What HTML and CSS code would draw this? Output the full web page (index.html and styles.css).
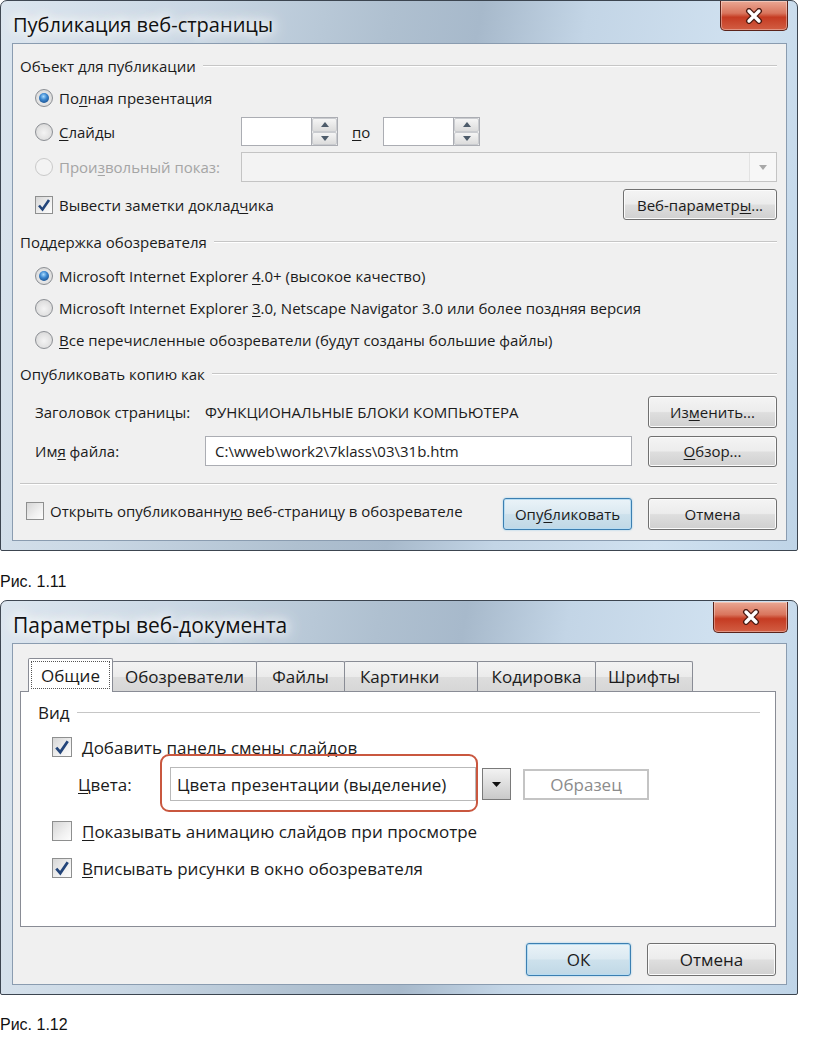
FILE: index.html
```html
<!DOCTYPE html>
<html lang="ru">
<head>
  <meta charset="utf-8">
  <title>Публикация веб-страницы</title>
  <link rel="stylesheet" href="styles.css">
</head>
<body>
  <!-- Рис. 1.11 -->
  <div class="win">
    <div class="titlebar">
      <span class="title">Публикация веб-страницы</span>
      <span class="close">
        <svg width="22" height="16" viewBox="0 0 22 16"><path d="M6 3 L16 13 M16 3 L6 13" stroke="#4a1a12" stroke-width="6" stroke-linecap="round"/><path d="M6 3 L16 13 M16 3 L6 13" stroke="#fff" stroke-width="3.4" stroke-linecap="round"/></svg>
      </span>
    </div>
    <div class="client pub">
      <div class="grp g-object"><span>Объект для публикации</span></div>
      <div class="row r-full"><span class="radio on"></span><span>По<u>л</u>ная презентация</span></div>
      <div class="row r-slides">
        <span class="opt"><span class="radio"></span><span><u>С</u>лайды</span></span>
        <span class="spin">
          <span class="field"></span>
          <span class="spin-btns">
            <span><svg width="8" height="5" viewBox="0 0 8 5"><path d="M0 5 L4 0 L8 5Z" fill="#4d5b6a"/></svg></span>
            <span><svg width="8" height="5" viewBox="0 0 8 5"><path d="M0 0 L4 5 L8 0Z" fill="#4d5b6a"/></svg></span>
          </span>
        </span>
        <span class="po"><u>п</u>о</span>
        <span class="spin">
          <span class="field"></span>
          <span class="spin-btns">
            <span><svg width="8" height="5" viewBox="0 0 8 5"><path d="M0 5 L4 0 L8 5Z" fill="#4d5b6a"/></svg></span>
            <span><svg width="8" height="5" viewBox="0 0 8 5"><path d="M0 0 L4 5 L8 0Z" fill="#4d5b6a"/></svg></span>
          </span>
        </span>
      </div>
      <div class="row r-custom disabled">
        <span class="opt"><span class="radio off"></span><span>Прои<u>з</u>вольный показ:</span></span>
        <span class="combo-off"><span class="combo-arrow"><svg width="8" height="5" viewBox="0 0 8 5"><path d="M0 0 L4 5 L8 0Z" fill="#a8a8a8"/></svg></span></span>
      </div>
      <div class="row r-notes">
        <span class="check"><svg width="14" height="14" viewBox="0 0 14 14"><path d="M2 7.5 L5.5 11.5 L12 2" fill="none" stroke="#23457a" stroke-width="2.6"/></svg></span>
        <span>Вывести заметки доклад<u>ч</u>ика</span>
        <span class="btn btn-web">Веб-параметр<u>ы</u>...</span>
      </div>

      <div class="grp g-browser"><span>Поддержка обозревателя</span></div>
      <div class="row r-ie"><span class="radio on"></span><span>Microsoft Internet Explorer <u>4</u>.0+ (высокое качество)</span></div>
      <div class="row r-ie"><span class="radio"></span><span>Microsoft Internet Explorer <u>3</u>.0, Netscape Navigator 3.0 или более поздняя версия</span></div>
      <div class="row r-ie"><span class="radio"></span><span><u>В</u>се перечисленные обозреватели (будут созданы большие файлы)</span></div>

      <div class="grp g-copy"><span>Опубликовать копию как</span></div>
      <div class="row r-title">
        <span class="lbl">Заголовок страницы:</span>
        <span>ФУНКЦИОНАЛЬНЫЕ БЛОКИ КОМПЬЮТЕРА</span>
        <span class="btn btn-side">Из<u>м</u>енить...</span>
      </div>
      <div class="row r-file">
        <span class="lbl">Им<u>я</u> файла:</span>
        <span class="field file-field">C:\wweb\work2\7klass\03\31b.htm</span>
        <span class="btn btn-side"><u>О</u>бзор...</span>
      </div>
      <div class="sep"></div>
      <div class="row r-bottom">
        <span class="open"><span class="check"></span><span>Открыть опубликованну<u>ю</u> веб-страницу в обозревателе</span></span>
        <span class="btn btn-default btn-publish">Опу<u>б</u>ликовать</span>
        <span class="btn btn-cancel">Отмена</span>
      </div>
    </div>
  </div>
  <p class="caption">Рис. 1.11</p>

  <!-- Рис. 1.12 -->
  <div class="win">
    <div class="titlebar">
      <span class="title title-big">Параметры веб-документа</span>
      <span class="close close-wide">
        <svg width="22" height="16" viewBox="0 0 22 16"><path d="M6 3 L16 13 M16 3 L6 13" stroke="#4a1a12" stroke-width="6" stroke-linecap="round"/><path d="M6 3 L16 13 M16 3 L6 13" stroke="#fff" stroke-width="3.4" stroke-linecap="round"/></svg>
      </span>
    </div>
    <div class="client opts">
      <div class="tabs">
        <span class="tab tab-general active">Общие</span>
        <span class="tab tab-browsers">Обозреватели</span>
        <span class="tab tab-files">Файлы</span>
        <span class="tab tab-pics">Картинки</span>
        <span class="tab tab-enc">Кодировка</span>
        <span class="tab tab-fonts">Шрифты</span>
      </div>
      <div class="panel">
        <div class="grp g-view"><span>Вид</span></div>
        <div class="row c-nav">
          <span class="check big"><svg width="16" height="16" viewBox="0 0 14 14"><path d="M2 7.5 L5.5 11.5 L12 2" fill="none" stroke="#23457a" stroke-width="2.4"/></svg></span>
          <span><u>Д</u>обавить панель смены слайдов</span>
        </div>
        <div class="row c-colors">
          <span class="clr-lbl"><u>Ц</u>вета:</span>
          <span class="combo-wrap"><span class="combo">Цвета презентации (выделение)</span></span>
          <span class="drop"><svg width="9" height="5" viewBox="0 0 9 5"><path d="M0 0 L4.5 5 L9 0Z" fill="#111"/></svg></span>
          <span class="sample">Образец</span>
        </div>
        <div class="row c-anim">
          <span class="check big"></span>
          <span><u>П</u>оказывать анимацию слайдов при просмотре</span>
        </div>
        <div class="row c-fit">
          <span class="check big"><svg width="16" height="16" viewBox="0 0 14 14"><path d="M2 7.5 L5.5 11.5 L12 2" fill="none" stroke="#23457a" stroke-width="2.4"/></svg></span>
          <span><u>В</u>писывать рисунки в окно обозревателя</span>
        </div>
      </div>
      <div class="actions">
        <span class="btn btn-default btn-ok">ОК</span>
        <span class="btn btn-cancel">Отмена</span>
      </div>
    </div>
  </div>
  <p class="caption caption-last">Рис. 1.12</p>
</body>
</html>
```

FILE: styles.css
```css
/* Базовые настройки */
*, *::before, *::after { box-sizing: border-box; }
body {
  margin: 0;
  background: #fff;
  font-family: "Open Sans", "Noto Sans", sans-serif;
  color: #1b1b1b;
}
u { text-decoration-thickness: 1px; text-underline-offset: 2px; }

/* Окно в стиле Windows 7 */
.win {
  width: 798px;
  display: flex; flex-direction: column;
  border: 1px solid #3c4550;
  border-radius: 7px 7px 2px 2px;
  padding: 0 10px 9px 11px;
  background: linear-gradient(100deg, #dce6ef 0%, #c9d7e4 22%, #afc0d0 44%, #a7b9cb 54%, #c3d5e6 66%, #d0e1f0 84%, #bfd4e7 100%);
}
.titlebar { height: 42px; display: flex; justify-content: space-between; align-items: center; }
.title {
  font-size: 20px; margin-top: 5px; margin-left: 1px; color: #111;
  text-shadow: 0 0 8px #fff, 0 0 14px #fff, 0 0 20px #fff, 0 0 26px #fff;
}
.title-big { font-size: 21px; }
.close {
  align-self: flex-start;
  width: 68px; height: 30px; margin-right: -1px;
  display: flex; align-items: center; justify-content: center;
  border: 1px solid #5b231a; border-top: 0;
  border-radius: 0 0 5px 5px;
  background: linear-gradient(#eaa894 0%, #d9755d 42%, #c53b22 56%, #d25e43 100%);
  box-shadow: inset 0 0 0 1px rgba(255, 255, 255, .35);
}
.close-wide { width: 75px; height: 31px; margin-top: 1px; }
.client { background: #f0f0f0; border: 1px solid #8a9cb0; }

/* Общие элементы управления */
.row { display: flex; align-items: center; }
.grp { display: flex; align-items: center; }
.grp::after {
  content: ''; flex: 1; margin-left: 7px;
  border-top: 1px solid #c6c6c6; border-bottom: 1px solid #fff;
}
.radio {
  width: 18px; height: 18px; flex: none; margin-right: 6px;
  border-radius: 50%; border: 1px solid #8c8f94;
  background: radial-gradient(circle at 50% 55%, #f4f4f4 0, #e2e2e2 55%, #cfcfcf 100%);
  display: flex; align-items: center; justify-content: center;
}
.radio.on::after {
  content: ''; width: 10px; height: 10px; border-radius: 50%;
  background: radial-gradient(circle at 45% 35%, #a9dcff 0, #3a86cf 40%, #0f3a72 100%);
}
.radio.off { border-color: #c9c9c9; background: #f3f3f3; }
.check {
  width: 18px; height: 18px; flex: none; margin-right: 6px;
  border: 1px solid #8e8f8f;
  background: linear-gradient(135deg, #d6d6d6 0%, #f0f0f0 60%, #fdfdfd 100%);
  display: flex; align-items: center; justify-content: center;
}
.field { background: #fff; border: 1px solid #abadb3; }
.btn {
  height: 32px; flex: none;
  display: flex; align-items: center; justify-content: center;
  border: 1px solid #707070; border-radius: 3px;
  background: linear-gradient(#f4f4f4 0%, #ececec 48%, #dedede 52%, #d0d0d0 100%);
  box-shadow: inset 0 0 0 1px #fbfbfb;
}
.btn-default {
  border-color: #3c7fb1;
  background: linear-gradient(#eaf3f8 0%, #dbe9f1 48%, #cde1ec 52%, #c0d8e6 100%);
  box-shadow: inset 0 0 0 1px #b7dcf2, 0 0 2px #8ec6e8;
}

/* Рис. 1.11 — Публикация веб-страницы */
.pub { height: 498px; padding: 0 9px 0 7px; font-size: 15px; }
.pub .g-object { height: 38px; padding-top: 6px; }
.pub .r-full { height: 32px; padding-left: 15px; }
.pub .r-slides { height: 35px; padding-left: 15px; }
.pub .r-custom { height: 36px; padding-left: 15px; }
.pub .r-notes { height: 39px; padding-left: 15px; }
.pub .g-browser { height: 36px; }
.pub .r-ie { height: 32px; padding-left: 15px; }
.pub .g-copy { height: 36px; }
.pub .r-title { height: 40px; padding-left: 15px; }
.pub .r-file { height: 38px; padding-left: 15px; }
.pub .sep { height: 28px; display: flex; align-items: center; }
.pub .sep::before { content: ''; flex: 1; border-top: 1px solid #c6c6c6; border-bottom: 1px solid #fff; }
.pub .r-bottom { height: 44px; align-items: flex-start; }

.opt { width: 206px; display: flex; align-items: center; }
.spin { display: flex; height: 29px; }
.spin .field { width: 71px; }
.spin-btns { width: 26px; display: flex; flex-direction: column; border: 1px solid #abadb3; border-left: 0; }
.spin-btns span {
  flex: 1; display: flex; align-items: center; justify-content: center;
  background: linear-gradient(#f5f5f5, #dcdcdc);
  border: 1px solid #c9cbcf; border-radius: 2px;
}
.po { width: 31px; margin-left: 14px; }
.disabled { color: #a5a5a5; }
.combo-off {
  flex: 1; height: 30px; display: flex; justify-content: flex-end;
  border: 1px solid #c4c4c4; background: #f3f3f3;
}
.combo-arrow {
  width: 27px; display: flex; align-items: center; justify-content: center;
  border-left: 1px solid #e2e2e2; background: #f7f7f7;
}
.btn-web { width: 154px; height: 31px; margin-left: auto; }
.lbl { width: 170px; }
.btn-side { width: 129px; margin-left: auto; }
.r-file .btn-side { height: 31px; }
.file-field { width: 427px; height: 30px; display: flex; align-items: center; padding-left: 9px; }
.open { display: flex; align-items: center; height: 26px; padding-left: 6px; }
.btn-publish { width: 129px; margin-left: auto; }
.pub .btn-cancel { width: 129px; margin-left: 16px; }

/* Рис. 1.12 — Параметры веб-документа */
.opts { height: 342px; padding: 14px 10px 0 7px; font-size: 17px; display: flex; flex-direction: column; }
.tabs { height: 33px; display: flex; align-items: flex-end; padding-left: 8px; }
.tab {
  height: 30px; flex: none; margin-left: -1px;
  display: flex; align-items: center; justify-content: center;
  border: 1px solid #898c95; border-bottom: 0; border-radius: 2px 2px 0 0;
  background: linear-gradient(#f3f3f3 0%, #ebebeb 50%, #dddddd 51%, #d6d6d6 100%);
}
.tab.active {
  height: 34px; margin-bottom: -1px; margin-left: 0; z-index: 1;
  background: #fff;
  outline: 1px dotted #555; outline-offset: -4px;
}
.tab-general { width: 85px; }
.tab-browsers { width: 145px; }
.tab-files { width: 89px; }
.tab-pics { width: 134px; justify-content: flex-start; padding-left: 15px; }
.tab-enc { width: 119px; }
.tab-fonts { width: 98px; }
.panel { height: 236px; background: #fff; border: 1px solid #898c95; padding: 0 15px 0 17px; }
.panel .g-view { height: 41px; }
.panel .check.big { width: 20px; height: 20px; margin-right: 10px; }
.c-nav { height: 28px; padding-left: 14px; }
.c-colors { height: 46px; padding-left: 40px; }
.c-anim { height: 48px; padding-left: 14px; }
.c-fit { height: 26px; padding-left: 14px; }
.clr-lbl { width: 92px; }
.combo-wrap { position: relative; display: flex; }
.combo-wrap::after {
  content: ''; position: absolute;
  left: -10px; top: -13px; right: -2px; bottom: -11px;
  border: 2px solid #c9573f; border-radius: 9px;
}
.combo {
  width: 306px; height: 34px; display: flex; align-items: center; padding-left: 6px;
  background: #fff; border: 1px solid #b9b9b9;
}
.drop {
  width: 29px; height: 32px; margin-left: 6px;
  display: flex; align-items: center; justify-content: center;
  border: 1px solid #7a7a7a;
  background: linear-gradient(#f2f2f2 0%, #dedede 50%, #c9c9c9 100%);
}
.sample {
  width: 126px; height: 31px; margin-left: 12px;
  display: flex; align-items: center; justify-content: center;
  border: 2px solid #c4c4c4; background: #fff; color: #8c8c8c;
}
.actions { display: flex; justify-content: flex-end; gap: 16px; margin-top: 16px; }
.actions .btn { height: 33px; }
.btn-ok { width: 105px; }
.actions .btn-cancel { width: 129px; }

/* Подписи к рисункам */
.caption {
  margin: 0; height: 49px; padding-top: 21px; line-height: 20px;
  font-family: "Liberation Sans", Arial, sans-serif; font-size: 16px; color: #111;
}
.caption-last { padding-top: 20px; }
```
